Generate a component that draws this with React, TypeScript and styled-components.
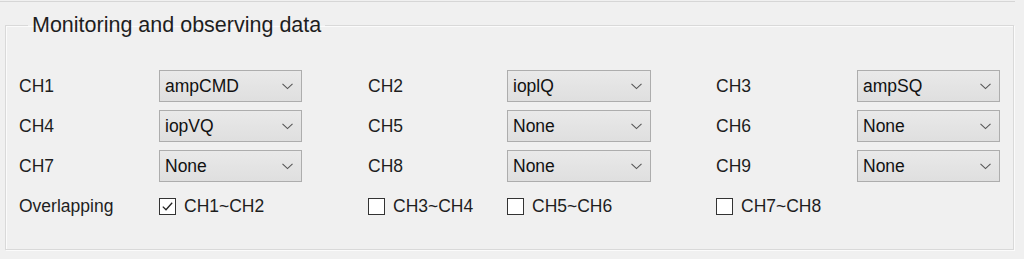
import React, { useState } from 'react';
import styled, { createGlobalStyle } from 'styled-components';

const GlobalStyle = createGlobalStyle`
    html, body {
        margin: 0;
        padding: 0;
        background: #f0f0f0;
    }
    body {
        font-family: "Liberation Sans", Arial, sans-serif;
        color: #1c1c1c;
    }
`;

const Page = styled.div`
    width: 1024px;
    height: 259px;
    overflow: hidden;
    background: #f0f0f0;
`;

const TopRule = styled.div`
    width: 1015px;
    height: 1px;
    border-bottom: 1px solid #d6d6d6;
`;

const GroupBox = styled.fieldset`
    margin: 10px 0 0 5px;
    width: 1009px;
    height: 238px;
    box-sizing: border-box;
    padding: 32px 0 0 13px;
    border: 1px solid #d9d9d9;
    box-shadow: inset 1px 1px 0 #fbfbfb, 1px 1px 0 #fbfbfb;
`;

const Title = styled.legend`
    margin-left: 9px;
    padding: 0 4px;
    font-size: 21.5px;
    line-height: 26px;
    color: #1e1e1e;
`;

const Grid = styled.div`
    display: grid;
    grid-template-columns: 140px 209px 139px 209px 141px 143px;
    grid-auto-rows: 32px;
    row-gap: 8px;
    align-items: center;
`;

const Label = styled.span`
    font-size: 17.5px;
    color: #1e1e1e;
`;

const Combo = styled.div<{ $w: number }>`
    width: ${p => p.$w}px;
    height: 32px;
    box-sizing: border-box;
    border: 1px solid #adadad;
    background: linear-gradient(#e9e9e9, #dfdfdf);
    display: flex;
    align-items: center;
    justify-content: space-between;
    padding: 0 8px 0 5px;
    font-size: 17.5px;
    color: #111;
`;

const CheckRow = styled.label<{ $span?: number }>`
    display: flex;
    align-items: center;
    gap: 8px;
    font-size: 17.5px;
    color: #1e1e1e;
    grid-column: span ${p => p.$span || 1};
`;

const Box = styled.span`
    width: 17px;
    height: 17px;
    box-sizing: border-box;
    border: 1px solid #333;
    background: #fff;
    display: flex;
    align-items: center;
    justify-content: center;
`;

function Chevron() {
    return (
        <svg width="11" height="7" viewBox="0 0 11 7">
            <polyline points="0.5,0.8 5.5,5.6 10.5,0.8" fill="none" stroke="#555" strokeWidth="1.1" />
        </svg>
    );
}

function Check({ label, checked, span }: { label: string; checked: boolean; span?: number }) {
    const [on, setOn] = useState(checked);
    return (
        <CheckRow $span={span} onClick={() => setOn(!on)}>
            <Box>
                {on && (
                    <svg width="13" height="13" viewBox="0 0 13 13">
                        <polyline points="1.8,6.6 5,9.8 11.2,2.8" fill="none" stroke="#222" strokeWidth="1.3" />
                    </svg>
                )}
            </Box>
            {label}
        </CheckRow>
    );
}

const rows = [
    [['CH1', 'ampCMD'], ['CH2', 'ioplQ'], ['CH3', 'ampSQ']],
    [['CH4', 'iopVQ'], ['CH5', 'None'], ['CH6', 'None']],
    [['CH7', 'None'], ['CH8', 'None'], ['CH9', 'None']],
];

const widths = [143, 144, 143];

function App() {
    return (
        <Page>
            <GlobalStyle />
            <TopRule />
            <GroupBox>
                <Title>Monitoring and observing data</Title>
                <Grid>
                    {rows.map((row, r) =>
                        row.map(([ch, val], c) => (
                            <React.Fragment key={r + '-' + c}>
                                <Label>{ch}</Label>
                                <Combo $w={widths[c]}>
                                    <span>{val}</span>
                                    <Chevron />
                                </Combo>
                            </React.Fragment>
                        ))
                    )}
                    <Label>Overlapping</Label>
                    <Check label="CH1~CH2" checked={true} />
                    <Check label="CH3~CH4" checked={false} />
                    <Check label="CH5~CH6" checked={false} />
                    <Check label="CH7~CH8" checked={false} />
                </Grid>
            </GroupBox>
        </Page>
    );
}

export default App;
